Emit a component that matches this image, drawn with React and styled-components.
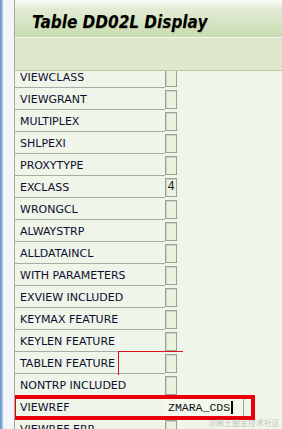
import styled, { createGlobalStyle } from 'styled-components';

const GlobalStyle = createGlobalStyle`
  html, body { margin: 0; padding: 0; }
  body { width: 282px; height: 429px; overflow: hidden; background: #f3f6f8; }
`;

const Screen = styled.div`
  position: relative;
  display: flex;
  width: 282px;
  height: 429px;
  overflow: hidden;
`;

const BlueEdge = styled.div`
  width: 3px;
  background: linear-gradient(to right, #5f8fc4, #b3cbe6);
`;

const Gutter = styled.div`
  width: 11px;
  background: #f3f6f8;
`;

const Window = styled.div`
  flex: 1;
  min-width: 0;
  display: flex;
  flex-direction: column;
  border-left: 1px solid #a3aa9e;
  background: #f0f5e9;
`;

const TopStrip = styled.div`
  height: 7px;
  background: linear-gradient(#f8faf5, #eaf0e2);
`;

const TitleBar = styled.div`
  height: 30px;
  display: flex;
  align-items: center;
  padding-left: 17px;
  background: linear-gradient(#e4edd7, #c8dcb2);
  border-bottom: 1px solid #f4f8ee;
`;

const Title = styled.h1`
  margin: 0;
  font-family: "DejaVu Sans Condensed", "DejaVu Sans", sans-serif;
  font-stretch: condensed;
  font-size: 17px;
  font-weight: bold;
  font-style: italic;
  color: #000;
  text-shadow: 0.5px 0.5px 0 rgba(140, 110, 30, 0.35);
  white-space: nowrap;
`;

const Toolbar = styled.div`
  height: 32px;
  background: #dfe8cc;
  border-bottom: 1px solid #b9c7a6;
`;

const Rows = styled.div`
  flex: 1;
  overflow: hidden;
  display: flex;
  flex-direction: column;
  & > :first-child { margin-top: -5px; }
`;

const Row = styled.div`
  position: relative;
  display: flex;
  flex: none;
  height: 22px;
`;

const Label = styled.div`
  box-sizing: border-box;
  width: 150px;
  height: 22px;
  padding: 3px 0 0 5px;
  border-bottom: 1px solid #a9aca4;
  font-family: "DejaVu Sans", sans-serif;
  font-size: 11px;
  line-height: 18px;
  color: #0d0d30;
  white-space: nowrap;
`;

const Check = styled.div`
  box-sizing: border-box;
  width: 12px;
  height: 19px;
  margin-top: 2px;
  border: 1px solid #9d9f99;
  box-shadow: inset 1px 1px 0 #cfd1ca;
  background: #ebf3de;
  font-family: "Liberation Mono", monospace;
  font-size: 12px;
  line-height: 17px;
  text-align: center;
  color: #111;
`;

const Field = styled.div`
  box-sizing: border-box;
  display: flex;
  align-items: center;
  width: 79px;
  height: 19px;
  margin-top: 2px;
  padding-left: 3px;
  background: #f3f8ec;
  border-right: 1px solid #a3a69e;
  font-family: "Liberation Mono", monospace;
  font-size: 11.5px;
  color: #111;
`;

const Caret = styled.span`
  display: inline-block;
  width: 2px;
  height: 13px;
  margin-left: 1px;
  background: #000;
`;

const RedFrame = styled.div`
  position: absolute;
  top: -1px;
  left: -3px;
  width: 243px;
  height: 25px;
  box-sizing: border-box;
  border: 4px solid #e8000a;
  pointer-events: none;
`;

const RedCorner = styled.div`
  position: absolute;
  top: -1px;
  left: 103px;
  width: 64px;
  height: 23px;
  border-top: 1px solid #d8101a;
  border-left: 1px solid #d8101a;
`;

const Watermark = styled.div`
  position: absolute;
  right: 2px;
  bottom: 1px;
  font-family: "Noto Sans CJK SC", sans-serif;
  font-size: 8px;
  color: rgba(150, 150, 150, 0.55);
`;

const rows = [
  { name: 'VIEWCLASS' },
  { name: 'VIEWGRANT' },
  { name: 'MULTIPLEX' },
  { name: 'SHLPEXI' },
  { name: 'PROXYTYPE' },
  { name: 'EXCLASS', value: '4' },
  { name: 'WRONGCL' },
  { name: 'ALWAYSTRP' },
  { name: 'ALLDATAINCL' },
  { name: 'WITH PARAMETERS' },
  { name: 'EXVIEW INCLUDED' },
  { name: 'KEYMAX FEATURE' },
  { name: 'KEYLEN FEATURE' },
  { name: 'TABLEN FEATURE', corner: true },
  { name: 'NONTRP INCLUDED' },
  { name: 'VIEWREF', field: 'ZMARA_CDS', framed: true },
  { name: 'VIEWREF ERR' },
];

export default function App() {
  return (
    <Screen>
      <GlobalStyle />
      <BlueEdge />
      <Gutter />
      <Window>
        <TopStrip />
        <TitleBar>
          <Title>Table DD02L Display</Title>
        </TitleBar>
        <Toolbar />
        <Rows>
          {rows.map((r) => (
            <Row key={r.name}>
              <Label>{r.name}</Label>
              {r.field ? (
                <Field>{r.field}<Caret /></Field>
              ) : (
                <Check>{r.value}</Check>
              )}
              {r.corner && <RedCorner />}
              {r.framed && <RedFrame />}
            </Row>
          ))}
        </Rows>
      </Window>
      <Watermark>@稀土掘金技术社区</Watermark>
    </Screen>
  );
}
